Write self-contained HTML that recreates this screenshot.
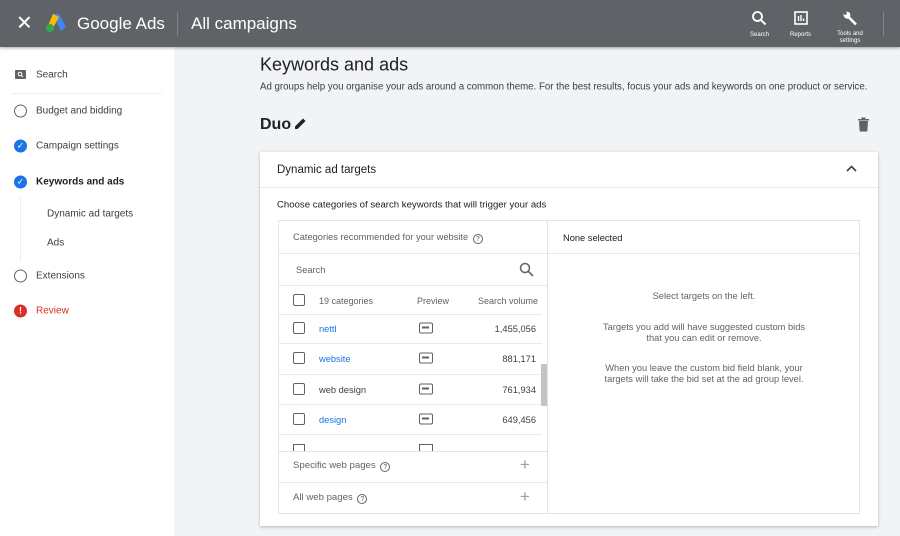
<!DOCTYPE html>
<html><head><meta charset="utf-8"><style>
*{box-sizing:border-box;margin:0;padding:0}
body{width:900px;height:536px;overflow:hidden;background:#f1f3f4;font-family:"Liberation Sans",Arial,sans-serif;color:#3c4043;position:relative}
.a{position:absolute}
.hdr{left:0;top:0;width:900px;height:47px;background:#5f6368;box-shadow:0 1px 3px rgba(0,0,0,.35);z-index:2}
.side{left:0;top:47px;width:174px;height:489px;background:#fff}
.si{position:absolute;left:36px;font-size:10px;color:#3c4043;transform:translateY(-50%)}
.circ{position:absolute;left:14px;width:13px;height:13px;border-radius:50%;transform:translateY(-50%)}
.t{position:absolute;white-space:nowrap;transform:translateY(-50%)}
.cb{position:absolute;left:293px;width:12px;height:12px;border:1.6px solid #5f6368;border-radius:2px;transform:translateY(-50%)}
.pv{position:absolute;left:419px;width:14px;height:11px;border:1.6px solid #5f6368;border-radius:2px;transform:translateY(-50%)}
.pv:after{content:"";position:absolute;left:2px;top:3px;width:7px;height:1.5px;background:#5f6368}
.hl{position:absolute;height:1px;background:#e8eaed}
.q{display:inline-block;width:10px;height:10px;border:1px solid #5f6368;border-radius:50%;font-size:7px;text-align:center;line-height:9px;vertical-align:-1px;margin-left:2px}
</style></head><body>
<div class="a hdr">
 <div class="t" style="left:16px;top:23px;color:#fff;font-size:20px">✕</div>
 <svg class="a" style="left:45px;top:13px" width="22" height="20" viewBox="0 0 22 20"><path d="M8 1 L14 1 L21 14 L16 18 Z" fill="#4285f4"/><path d="M8 1 L14 4 L7 17 L2 15 Z" fill="#fbbc04"/><circle cx="5" cy="15" r="4" fill="#34a853"/></svg>
 <div class="t" style="left:77px;top:24px;color:#fff;font-size:17px">Google Ads</div>
 <div class="a" style="left:177px;top:12px;width:1px;height:24px;background:#80868b"></div>
 <div class="t" style="left:191px;top:24px;color:#fff;font-size:17px">All campaigns</div>
 <svg class="a" style="left:751px;top:10px" width="16" height="16" viewBox="0 0 16 16"><circle cx="6.5" cy="6.5" r="4.5" fill="none" stroke="#fff" stroke-width="1.8"/><path d="M10 10 L14.5 14.5" stroke="#fff" stroke-width="2"/></svg>
 <div class="t" style="left:750px;top:35px;color:#fff;font-size:6px">Search</div>
 <svg class="a" style="left:794px;top:11px" width="14" height="14" viewBox="0 0 14 14"><rect x="1" y="1" width="12" height="12" fill="none" stroke="#fff" stroke-width="1.6"/><path d="M4.5 10V5M7 10V4M9.5 10V7.5" stroke="#fff" stroke-width="1.4"/></svg>
 <div class="t" style="left:790px;top:35px;color:#fff;font-size:6px">Reports</div>
 <svg class="a" style="left:842px;top:10px" width="17" height="17" viewBox="0 0 17 17"><path d="M3 3 A3.5 3.5 0 0 0 7 7.5 L14 14.5" fill="none" stroke="#fff" stroke-width="2.6"/><circle cx="5" cy="5" r="3.4" fill="#fff"/><circle cx="3.2" cy="3.2" r="1.6" fill="#5f6368"/></svg>
 <div class="a" style="left:835px;top:31px;width:30px;color:#fff;font-size:6px;text-align:center;line-height:6.5px">Tools and settings</div>
 <div class="a" style="left:883px;top:12px;width:1px;height:24px;background:#80868b"></div>
</div>
<div class="a side"></div>
<div class="a" style="left:15px;top:70px;width:11px;height:9px;background:#5f6368;border-radius:1px"></div>
<svg class="a" style="left:17px;top:71px" width="7" height="7" viewBox="0 0 7 7"><circle cx="3" cy="3" r="1.8" fill="none" stroke="#fff" stroke-width="1"/><path d="M4.3 4.3L6 6" stroke="#fff"/></svg>
<div class="si" style="top:75px">Search</div>
<div class="hl" style="left:12px;top:93px;width:150px;background:#eee"></div>
<div class="circ" style="top:111px;border:1.5px solid #5f6368"></div><div class="si" style="top:111px">Budget and bidding</div>
<div class="circ" style="top:146px;background:#1a73e8;color:#fff;font-size:9px;text-align:center;line-height:13px">✓</div><div class="si" style="top:146px">Campaign settings</div>
<div class="circ" style="top:182px;background:#1a73e8;color:#fff;font-size:9px;text-align:center;line-height:13px">✓</div><div class="si" style="top:182px;font-weight:bold;color:#202124">Keywords and ads</div>
<div class="a" style="left:20px;top:198px;width:1px;height:64px;background:#eee"></div>
<div class="si" style="top:214px;left:47px">Dynamic ad targets</div>
<div class="si" style="top:243px;left:47px">Ads</div>
<div class="circ" style="top:276px;border:1.5px solid #5f6368"></div><div class="si" style="top:276px">Extensions</div>
<div class="circ" style="top:311px;background:#d93025;color:#fff;font-size:9px;font-weight:bold;text-align:center;line-height:13px">!</div><div class="si" style="top:311px;color:#d93025">Review</div>

<div class="t" style="left:260px;top:65px;font-size:18px;color:#202124">Keywords and ads</div>
<div class="t" style="left:260px;top:87px;font-size:9.7px;color:#3c4043">Ad groups help you organise your ads around a common theme. For the best results, focus your ads and keywords on one product or service.</div>
<div class="t" style="left:260px;top:125px;font-size:16px;color:#202124;font-weight:bold">Duo</div>
<svg class="a" style="left:293px;top:116px" width="15" height="15" viewBox="0 0 15 15"><path d="M2 13 L2 10.5 L10 2.5 L12.5 5 L4.5 13 Z" fill="#202124"/></svg>
<svg class="a" style="left:857px;top:117px" width="13" height="15" viewBox="0 0 13 15"><path d="M1 2h11v1.5H1zM4.5 0.5h4v1.5h-4zM2 4h9l-0.7 10.5H2.7z" fill="#5f6368"/></svg>

<div class="a" style="left:260px;top:152px;width:618px;height:374px;background:#fff;box-shadow:0 1px 3px rgba(0,0,0,.25)"></div>
<div class="t" style="left:277px;top:170px;font-size:11.5px;color:#202124">Dynamic ad targets</div>
<svg class="a" style="left:846px;top:165px" width="11" height="7" viewBox="0 0 11 7"><path d="M1 6 L5.5 1.5 L10 6" fill="none" stroke="#3c4043" stroke-width="1.6"/></svg>
<div class="hl" style="left:260px;top:187px;width:618px"></div>
<div class="t" style="left:277px;top:205px;font-size:9.6px;color:#202124">Choose categories of search keywords that will trigger your ads</div>
<div class="a" style="left:278px;top:220px;width:582px;height:294px;border:1px solid #e3e3e3"></div>
<div class="a" style="left:547px;top:220px;width:1px;height:294px;background:#e3e3e3"></div>
<div class="hl" style="left:278px;top:253px;width:582px"></div>
<div class="t" style="left:293px;top:238px;font-size:9.3px;color:#5f6368">Categories recommended for your website <span class="q">?</span></div>
<div class="t" style="left:563px;top:238px;font-size:9.3px;color:#202124">None selected</div>
<div class="t" style="left:296px;top:270px;font-size:9.3px;color:#5f6368">Search</div>
<svg class="a" style="left:519px;top:262px" width="15" height="15" viewBox="0 0 15 15"><circle cx="6" cy="6" r="4.5" fill="none" stroke="#5f6368" stroke-width="1.5"/><path d="M9.3 9.3 L14 14" stroke="#5f6368" stroke-width="1.6"/></svg>
<div class="hl" style="left:278px;top:285px;width:269px"></div>
<div class="cb" style="top:300px"></div>
<div class="t" style="left:319px;top:301px;font-size:9px;color:#5f6368">19 categories</div>
<div class="t" style="left:417px;top:301px;font-size:9px;color:#5f6368">Preview</div>
<div class="t" style="left:478px;top:301px;font-size:9px;color:#5f6368">Search volume</div>
<div class="hl" style="left:278px;top:314px;width:264px"></div>
<div class="cb" style="top:328px"></div><div class="t" style="left:319px;top:329px;font-size:9.3px;color:#1a73e8">nettl</div><div class="pv" style="top:328px"></div><div class="t" style="left:470px;width:66px;text-align:right;top:329px;font-size:9.3px">1,455,056</div>
<div class="hl" style="left:278px;top:343px;width:264px"></div>
<div class="cb" style="top:358px"></div><div class="t" style="left:319px;top:359px;font-size:9.3px;color:#1a73e8">website</div><div class="pv" style="top:358px"></div><div class="t" style="left:470px;width:66px;text-align:right;top:359px;font-size:9.3px">881,171</div>
<div class="hl" style="left:278px;top:374px;width:264px"></div>
<div class="cb" style="top:389px"></div><div class="t" style="left:319px;top:390px;font-size:9.3px">web design</div><div class="pv" style="top:389px"></div><div class="t" style="left:470px;width:66px;text-align:right;top:390px;font-size:9.3px">761,934</div>
<div class="hl" style="left:278px;top:404px;width:264px"></div>
<div class="cb" style="top:419px"></div><div class="t" style="left:319px;top:420px;font-size:9.3px;color:#1a73e8">design</div><div class="pv" style="top:419px"></div><div class="t" style="left:470px;width:66px;text-align:right;top:420px;font-size:9.3px">649,456</div>
<div class="hl" style="left:278px;top:434px;width:264px"></div>
<div class="a" style="left:293px;top:444px;width:12px;height:8px;border:1.6px solid #5f6368;border-bottom:none"></div>
<div class="a" style="left:419px;top:444px;width:14px;height:8px;border:1.6px solid #5f6368;border-bottom:none"></div>
<div class="a" style="left:541px;top:364px;width:6px;height:42px;background:#c4c4c4"></div>
<div class="a" style="left:278px;top:451px;width:269px;height:1px;background:#e3e3e3"></div>
<div class="t" style="left:293px;top:466px;font-size:9.6px;color:#5f6368">Specific web pages <span class="q">?</span></div>
<div class="t" style="left:520px;top:465px;font-size:17px;color:#9aa0a6">+</div>
<div class="hl" style="left:278px;top:482px;width:269px"></div>
<div class="t" style="left:293px;top:498px;font-size:9.6px;color:#5f6368">All web pages <span class="q">?</span></div>
<div class="t" style="left:520px;top:497px;font-size:17px;color:#9aa0a6">+</div>
<div class="a" style="left:548px;top:282px;width:312px;text-align:center;font-size:9.3px;color:#5f6368;line-height:11.5px">
 <div style="margin-top:9px">Select targets on the left.</div>
 <div style="margin-top:19px">Targets you add will have suggested custom bids<br>that you can edit or remove.</div>
 <div style="margin-top:18px">When you leave the custom bid field blank, your<br>targets will take the bid set at the ad group level.</div>
</div>
</body></html>
